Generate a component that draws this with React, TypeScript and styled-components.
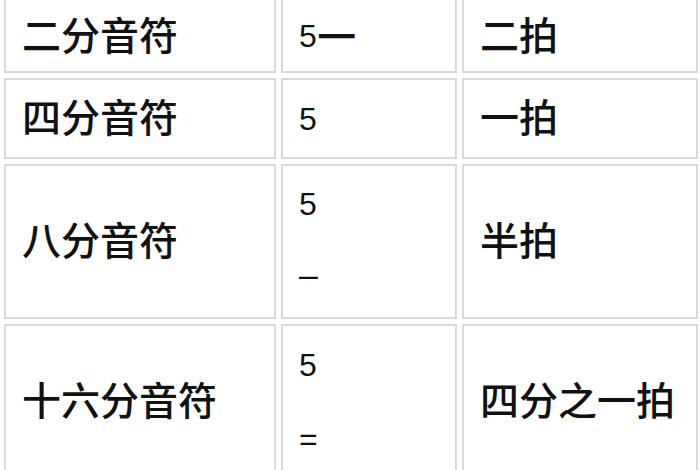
import React from "react";
import styled, { createGlobalStyle } from "styled-components";

const Global = createGlobalStyle`
  html, body {
    margin: 0;
    padding: 0;
    background: #ffffff;
    overflow: hidden;
  }
  body {
    font-family: "Noto Sans CJK SC", "Liberation Sans", sans-serif;
    color: #111111;
  }
`;

const Table = styled.div`
  display: grid;
  grid-template-columns: 272px 176px 236px;
  grid-template-rows: 77px 81px 155px 155px;
  gap: 5px;
  margin: -4px 0 0 4px;
`;

const Cell = styled.div<{ $first?: boolean }>`
  box-sizing: border-box;
  border: 2px solid #d9d9d9;
  padding: ${(p) => (p.$first ? "0 16px 3px" : "0 16px 7px")};
  display: flex;
  flex-direction: column;
  justify-content: center;
  font-family: "Noto Sans CJK SC", sans-serif;
  font-size: 39px;
  font-weight: 500;
  line-height: 60px;
  white-space: nowrap;
`;

const NotationCell = styled(Cell)`
  padding: ${(p) => (p.$first ? "3px 16px 0" : "0 16px")};
`;

const Notation = styled.div<{ $first?: boolean }>`
  font-family: "Liberation Sans", "Noto Sans CJK SC", sans-serif;
  font-size: 32px;
  font-weight: 400;
  line-height: ${(p) => (p.$first ? "66px" : "74px")};
`;

const LongDash = styled.span`
  font-family: "Noto Sans CJK SC", sans-serif;
  font-size: 44px;
  font-weight: 600;
  line-height: 1;
  position: relative;
  top: 2px;
`;

const ShortDash = styled.span`
  position: relative;
  top: -4px;
  font-size: 34px;
`;

type RowData = {
  name: string;
  notation: string[];
  beats: string;
};

const rows: RowData[] = [
  { name: "二分音符", notation: ["5—"], beats: "二拍" },
  { name: "四分音符", notation: ["5"], beats: "一拍" },
  { name: "八分音符", notation: ["5", "–"], beats: "半拍" },
  { name: "十六分音符", notation: ["5", "="], beats: "四分之一拍" },
];

function renderNotation(line: string, first: boolean, key: number) {
  if (line.includes("—")) {
    const [head] = line.split("—");
    return (
      <Notation key={key} $first={first}>
        {head}
        <LongDash>—</LongDash>
      </Notation>
    );
  }
  if (line === "–") {
    return (
      <Notation key={key} $first={first}>
        <ShortDash>–</ShortDash>
      </Notation>
    );
  }
  return (
    <Notation key={key} $first={first}>
      {line}
    </Notation>
  );
}

export default function App() {
  return (
    <>
      <Global />
      <Table>
        {rows.map((r, i) => (
          <React.Fragment key={r.name}>
            <Cell $first={i === 0}>{r.name}</Cell>
            <NotationCell $first={i === 0}>
              {r.notation.map((l, j) => renderNotation(l, i === 0, j))}
            </NotationCell>
            <Cell $first={i === 0}>{r.beats}</Cell>
          </React.Fragment>
        ))}
      </Table>
    </>
  );
}
